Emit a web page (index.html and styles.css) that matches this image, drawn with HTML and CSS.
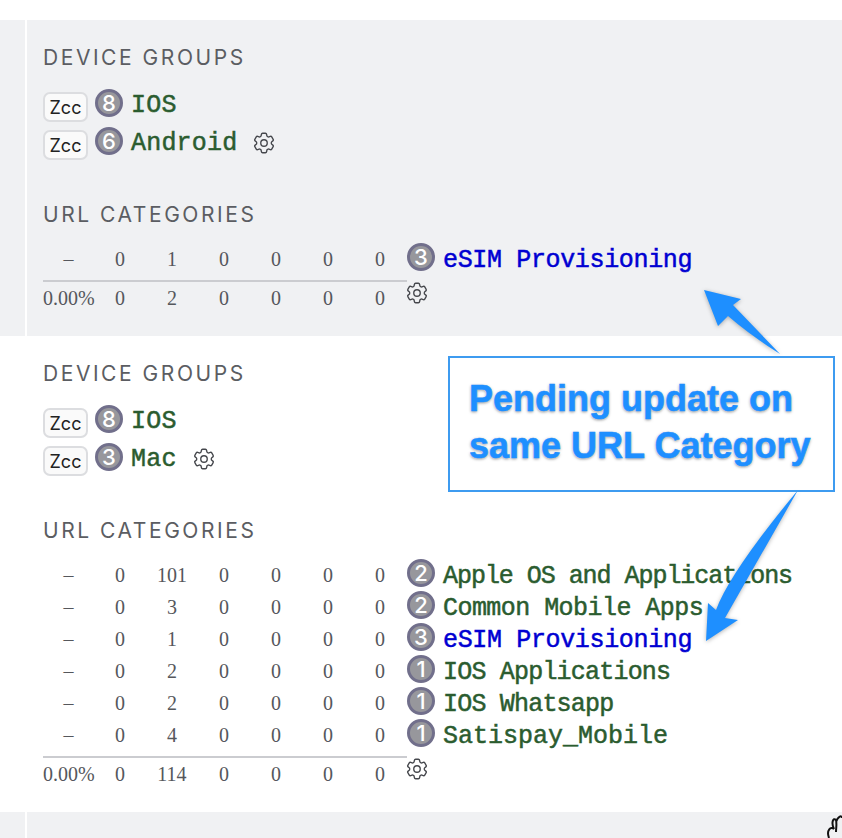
FILE: index.html
```html
<!DOCTYPE html>
<html lang="en">
  <head>
    <meta charset="UTF-8" />
    <title>Device groups and URL categories</title>
    <link rel="stylesheet" href="styles.css">
  </head>

  <body>
    <svg class="defs" width="0" height="0">
      <symbol id="gear" viewBox="0 0 24 24">
        <path d="M9.594 3.94c.09-.542.56-.94 1.11-.94h2.593c.55 0 1.02.398 1.11.94l.213 1.281c.063.374.313.686.645.87.074.04.147.083.22.127.325.196.72.257 1.075.124l1.217-.456a1.125 1.125 0 0 1 1.37.49l1.296 2.247a1.125 1.125 0 0 1-.26 1.431l-1.003.827c-.293.241-.438.613-.43.992a7.723 7.723 0 0 1 0 .255c-.008.378.137.75.43.991l1.004.827c.424.35.534.955.26 1.43l-1.298 2.247a1.125 1.125 0 0 1-1.369.491l-1.217-.456c-.355-.133-.75-.072-1.076.124a6.47 6.47 0 0 1-.22.128c-.331.183-.581.495-.644.869l-.213 1.281c-.09.543-.56.94-1.11.94h-2.594c-.55 0-1.019-.398-1.11-.94l-.213-1.281c-.062-.374-.312-.686-.644-.87a6.52 6.52 0 0 1-.22-.127c-.325-.196-.72-.257-1.076-.124l-1.217.456a1.125 1.125 0 0 1-1.369-.49l-1.297-2.247a1.125 1.125 0 0 1 .26-1.431l1.004-.827c.292-.24.437-.613.43-.991a6.932 6.932 0 0 1 0-.255c.007-.38-.138-.751-.43-.992l-1.004-.827a1.125 1.125 0 0 1-.26-1.43l1.297-2.247a1.125 1.125 0 0 1 1.37-.491l1.216.456c.356.133.751.072 1.076-.124.072-.044.146-.086.22-.128.332-.183.582-.495.644-.869l.214-1.28Z" />
        <path d="M15 12a3 3 0 1 1-6 0 3 3 0 0 1 6 0Z" />
      </symbol>
    </svg>

    <div class="page">
      <section class="band band-gray">
        <div class="side"></div>
        <div class="content">
          <h3>Device Groups</h3>
          <div class="groups">
            <div class="group">
              <span class="tag">Zcc</span><span class="count">8</span><span class="name">IOS</span>
            </div>
            <div class="group">
              <span class="tag">Zcc</span><span class="count">6</span><span class="name">Android</span>
              <svg class="gear gear-group"><use href="#gear" /></svg>
            </div>
          </div>

          <h3 class="second">URL Categories</h3>
          <div class="url-table">
            <div class="url-row">
              <span>–</span><span>0</span><span>1</span><span>0</span><span>0</span><span>0</span><span>0</span>
              <span class="count">3</span><span class="name pending">eSIM Provisioning</span>
            </div>
            <div class="url-row url-total">
              <span>0.00%</span><span>0</span><span>2</span><span>0</span><span>0</span><span>0</span><span>0</span>
              <svg class="gear"><use href="#gear" /></svg>
            </div>
          </div>
        </div>
      </section>

      <section class="band">
        <div class="side"></div>
        <div class="content">
          <h3>Device Groups</h3>
          <div class="groups">
            <div class="group">
              <span class="tag">Zcc</span><span class="count">8</span><span class="name">IOS</span>
            </div>
            <div class="group">
              <span class="tag">Zcc</span><span class="count">3</span><span class="name">Mac</span>
              <svg class="gear gear-group"><use href="#gear" /></svg>
            </div>
          </div>

          <h3 class="second">URL Categories</h3>
          <div class="url-table">
            <div class="url-row">
              <span>–</span><span>0</span><span>101</span><span>0</span><span>0</span><span>0</span><span>0</span>
              <span class="count">2</span><span class="name narrow">Apple OS and Applications</span>
            </div>
            <div class="url-row">
              <span>–</span><span>0</span><span>3</span><span>0</span><span>0</span><span>0</span><span>0</span>
              <span class="count">2</span><span class="name tight">Common Mobile Apps</span>
            </div>
            <div class="url-row">
              <span>–</span><span>0</span><span>1</span><span>0</span><span>0</span><span>0</span><span>0</span>
              <span class="count">3</span><span class="name pending">eSIM Provisioning</span>
            </div>
            <div class="url-row">
              <span>–</span><span>0</span><span>2</span><span>0</span><span>0</span><span>0</span><span>0</span>
              <span class="count">1</span><span class="name tighter">IOS Applications</span>
            </div>
            <div class="url-row">
              <span>–</span><span>0</span><span>2</span><span>0</span><span>0</span><span>0</span><span>0</span>
              <span class="count">1</span><span class="name tighter">IOS Whatsapp</span>
            </div>
            <div class="url-row">
              <span>–</span><span>0</span><span>4</span><span>0</span><span>0</span><span>0</span><span>0</span>
              <span class="count">1</span><span class="name even">Satispay_Mobile</span>
            </div>
            <div class="url-row url-total">
              <span>0.00%</span><span>0</span><span>114</span><span>0</span><span>0</span><span>0</span><span>0</span>
              <svg class="gear"><use href="#gear" /></svg>
            </div>
          </div>
        </div>
      </section>

      <section class="band band-gray band-last">
        <div class="side"></div>
        <div class="content"></div>
      </section>

      <!-- annotation drawn over the screenshot -->
      <svg class="arrows" viewBox="0 0 842 838" width="842" height="838">
        <path class="arrow" d="M704 290 L741 299 L733 305 L780 354 Q750 335 728 316 L718 326 Z" />
        <path class="arrow" d="M798 490 L725 618 L738 620 L706 641 L708 603 L716 610 Q730 572 798 490 Z" />
        <path class="squiggle" d="M829 838 C826 830 831 826 834 829 C831 823 833 817 836 820 C837 824 836 828 836 832 M836 822 C838 816 842 815 842 818" />
      </svg>
      <div class="callout">Pending update on<br>same URL Category</div>
    </div>
  </body>
</html>
```

FILE: styles.css
```css
html,
body {
  margin: 0;
  padding: 0;
  background: #fff;
}

.defs {
  display: block;
  height: 0;
}

.page {
  position: relative;
  width: 842px;
  height: 838px;
  padding-top: 20px;
  box-sizing: border-box;
  overflow: hidden;
}

.band {
  display: flex;
  height: 476px;
}

.band-gray {
  height: 316px;
  background: #f0f1f3;
}

.band-last {
  height: 26px;
}

.side {
  width: 25px;
  border-right: 2px solid #fff;
  flex-shrink: 0;
}

.content {
  flex: 1;
  padding: 26px 0 0 16px;
}

.band-last .content {
  padding: 0;
}

h3 {
  margin: 0;
  font-family: Inter, sans-serif;
  font-size: 21px;
  line-height: 24px;
  font-weight: 400;
  letter-spacing: 2.55px;
  text-transform: uppercase;
  color: #5b5d62;
}

h3.second {
  margin-top: 38px;
}

.groups {
  margin-top: 19px;
}

.group {
  display: flex;
  height: 38px;
  align-items: flex-start;
}

.tag {
  box-sizing: border-box;
  width: 45px;
  height: 30px;
  margin: 3px 7px 0 0;
  border: 2px solid #dcdde0;
  border-radius: 7px;
  background: #fafafa;
  font-family: Inter, sans-serif;
  font-size: 18px;
  line-height: 27px;
  text-align: center;
  color: #222;
}

.count {
  box-sizing: border-box;
  width: 28px;
  height: 28px;
  border: 3px solid #716f8b;
  border-radius: 50%;
  background: #97979c;
  font-family: Inter, sans-serif;
  font-size: 22px;
  font-weight: 500;
  line-height: 22px;
  text-align: center;
  color: #fff;
  flex-shrink: 0;
}

.name {
  margin: 3px 0 0 8px;
  font-family: "Liberation Mono", monospace;
  font-size: 25px;
  line-height: 28px;
  letter-spacing: 0.2px;
  color: #2b5c2f;
  -webkit-text-stroke: 0.5px #2b5c2f;
  white-space: nowrap;
}

.name.pending {
  letter-spacing: -0.35px;
  color: #0000d2;
  -webkit-text-stroke-color: #0000d2;
}

.name.even {
  letter-spacing: 0;
}

.name.narrow {
  letter-spacing: -1.04px;
}

.name.tight {
  letter-spacing: -0.55px;
}

.name.tighter {
  letter-spacing: -0.8px;
}

.gear {
  width: 26px;
  height: 26px;
  fill: none;
  stroke: #45474c;
  stroke-width: 1.25;
  flex-shrink: 0;
}

.gear-group {
  margin: 3px 0 0 14px;
}

.url-table {
  margin-top: 16px;
}

.url-row {
  display: grid;
  grid-template-columns: 51px repeat(6, 52px) 29px auto;
  height: 32px;
  align-items: start;
  font-family: "Liberation Serif", serif;
  font-size: 20px;
  line-height: 32px;
  color: #55575c;
  text-align: center;
}

.url-row .count {
  margin-left: 1px;
}

.url-row .name {
  margin-top: 4px;
  text-align: left;
}

.url-total {
  box-sizing: border-box;
  width: 385px;
  height: 40px;
  margin-top: 5px;
  background: linear-gradient(#cbccd0, #cbccd0) 0 0 / 364px 2px no-repeat;
}

.url-total > span {
  margin-top: 2px;
}

.url-total .gear {
  margin: 0 0 0 -2px;
}

.arrows {
  position: absolute;
  top: 0;
  left: 0;
  pointer-events: none;
}

.arrow {
  fill: #1e8fff;
  filter: drop-shadow(0 1px 2px rgba(0, 0, 0, 0.3));
}

.squiggle {
  fill: none;
  stroke: #111;
  stroke-width: 2;
}

.callout {
  position: absolute;
  left: 448px;
  top: 356px;
  box-sizing: border-box;
  width: 387px;
  height: 136px;
  padding: 17px 0 0 19px;
  border: 2px solid #3d9bf0;
  font-family: "Liberation Sans", sans-serif;
  font-size: 36px;
  font-weight: 700;
  line-height: 47px;
  white-space: nowrap;
  color: #1e8fff;
  -webkit-text-stroke: 0.6px #1e8fff;
  text-shadow: 0 0 2px #fff, 0 1px 3px rgba(0, 0, 0, 0.5);
}
```
